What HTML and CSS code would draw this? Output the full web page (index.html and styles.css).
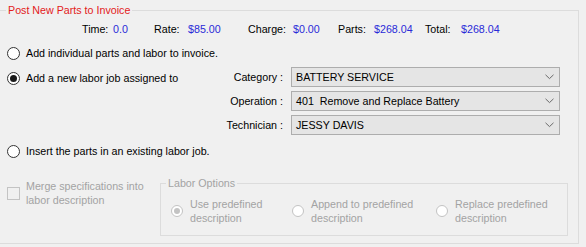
FILE: index.html
```html
<!DOCTYPE html>
<html>
<head>
<meta charset="utf-8">
<link rel="stylesheet" href="styles.css">
</head>
<body>
<fieldset class="main">
  <legend class="main-title">Post New Parts to Invoice</legend>
  <div class="stats">
    <span>Time:</span><span class="val">0.0</span>
    <span>Rate:</span><span class="val">$85.00</span>
    <span>Charge:</span><span class="val">$0.00</span>
    <span>Parts:</span><span class="val">$268.04</span>
    <span>Total:</span><span class="val">$268.04</span>
  </div>
  <div class="opt opt1"><span class="radio"></span><span>Add individual parts and labor to invoice.</span></div>
  <div class="mid">
    <div class="opt opt2"><span class="radio checked"></span><span>Add a new labor job assigned to</span></div>
    <div class="combos">
      <span class="clabel">Category :</span>
      <div class="combo"><span>BATTERY SERVICE</span><svg width="9" height="6" viewBox="0 0 9 6"><path d="M0.5 0.8 L4.5 4.6 L8.5 0.8" fill="none" stroke="#6a6a6a" stroke-width="1"/></svg></div>
      <span class="clabel">Operation :</span>
      <div class="combo"><span>401&nbsp; Remove and Replace Battery</span><svg width="9" height="6" viewBox="0 0 9 6"><path d="M0.5 0.8 L4.5 4.6 L8.5 0.8" fill="none" stroke="#6a6a6a" stroke-width="1"/></svg></div>
      <span class="clabel">Technician :</span>
      <div class="combo"><span>JESSY DAVIS</span><svg width="9" height="6" viewBox="0 0 9 6"><path d="M0.5 0.8 L4.5 4.6 L8.5 0.8" fill="none" stroke="#6a6a6a" stroke-width="1"/></svg></div>
    </div>
  </div>
  <div class="opt opt3"><span class="radio"></span><span>Insert the parts in an existing labor job.</span></div>
  <div class="bottom">
    <div class="merge"><span class="check"></span><span class="dis">Merge specifications into<br>labor description</span></div>
    <fieldset class="labor">
      <legend class="labor-title">Labor Options</legend>
      <div class="labor-opts">
        <div class="lopt"><span class="radio dradio checked"></span><span class="dis">Use predefined<br>description</span></div>
        <div class="lopt"><span class="radio dradio"></span><span class="dis">Append to predefined<br>description</span></div>
        <div class="lopt"><span class="radio dradio"></span><span class="dis">Replace predefined<br>description</span></div>
      </div>
    </fieldset>
  </div>
</fieldset>
</body>
</html>
```
FILE: styles.css
```css
html, body {
  margin: 0;
  padding: 0;
  background: #f0f0f0;
}
body {
  width: 586px;
  height: 247px;
  overflow: hidden;
  font-family: "Liberation Sans", Arial, sans-serif;
  font-size: 10.7px;
  line-height: 14px;
  color: #000;
}
.main {
  box-sizing: border-box;
  margin: 3px 0 0 -1px;
  padding: 0;
  width: 580px;
  height: 241px;
  border: 1px solid #dcdcdc;
  min-width: 0;
}
.main-title {
  margin-left: 6px;
  padding: 0 2px;
  color: #e3201b;
  font-size: 10.7px;
  line-height: 14px;
}
.stats {
  margin: 5px 0 0 82px;
  display: grid;
  grid-template-columns: 31px 41px 34px 60px 45px 45px 36px 51px 36px auto;
  height: 14px;
}
.val {
  color: #2a2ad8;
}
.opt {
  display: flex;
  align-items: center;
  height: 14px;
  padding-left: 7px;
  gap: 6px;
}
.opt1 { margin-top: 10px; }
.radio {
  box-sizing: border-box;
  width: 13px;
  height: 13px;
  border: 1px solid #333;
  border-radius: 50%;
  background: #fff;
  flex: none;
  display: flex;
  align-items: center;
  justify-content: center;
}
.radio.checked::after {
  content: "";
  width: 7px;
  height: 7px;
  border-radius: 50%;
  background: #1a1a1a;
}
.mid {
  margin-top: 7px;
  display: flex;
  align-items: flex-start;
}
.opt2 {
  width: 193px;
  margin-top: 4px;
}
.combos {
  display: grid;
  grid-template-columns: 83px 269px;
  column-gap: 8px;
  row-gap: 4px;
}
.clabel {
  text-align: right;
  align-self: center;
  white-space: nowrap;
}
.combo {
  box-sizing: border-box;
  height: 20px;
  border: 1px solid #adadad;
  background: #e5e5e5;
  display: flex;
  align-items: center;
  justify-content: space-between;
  padding: 0 5px 0 4px;
}
.opt3 { margin-top: 9px; }
.bottom {
  margin-top: 18px;
  display: flex;
  align-items: flex-start;
}
.merge {
  width: 160px;
  margin-top: 3px;
  padding-left: 7px;
  box-sizing: border-box;
  display: flex;
  align-items: center;
  gap: 6px;
}
.check {
  box-sizing: border-box;
  width: 13px;
  height: 13px;
  border: 1px solid #c3c3c3;
  background: #f0f0f0;
  flex: none;
}
.dis {
  color: #a3a3a3;
}
.labor {
  box-sizing: border-box;
  margin: 0;
  padding: 0;
  width: 408px;
  height: 60px;
  border: 1px solid #dcdcdc;
  min-width: 0;
}
.labor-title {
  margin-left: 5px;
  padding: 0 2px;
  color: #a3a3a3;
  line-height: 14px;
}
.labor-opts {
  margin: 7px 0 0 10px;
  display: grid;
  grid-template-columns: 121px 144px auto;
}
.lopt {
  display: flex;
  align-items: center;
  gap: 7px;
}
.dradio {
  width: 12px;
  height: 12px;
  border-color: #c3c3c3;
  background: #fff;
}
.dradio.checked::after {
  width: 6px;
  height: 6px;
  background: #c3c3c3;
}
```
